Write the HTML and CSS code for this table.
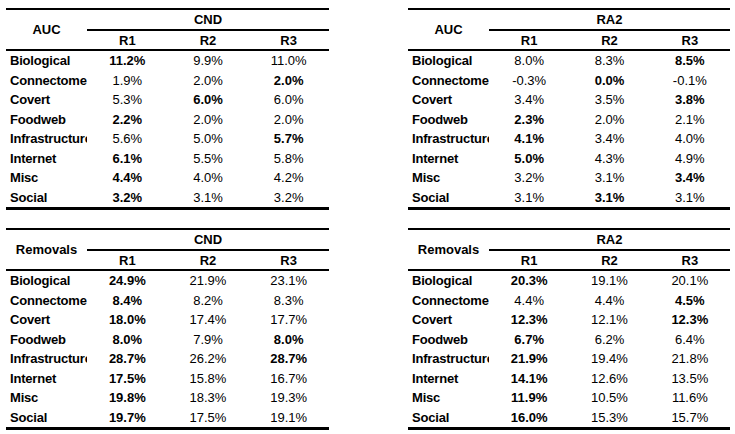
FILE: index.html
```html
<!DOCTYPE html>
<html>
<head>
<meta charset="utf-8">
<link rel="stylesheet" href="styles.css">
</head>
<body>
<div class="grid">
  <table class="res">
    <colgroup><col class="c-label"><col><col><col></colgroup>
    <thead>
      <tr class="h1"><th rowspan="2" class="corner">AUC</th><th colspan="3" class="group">CND</th></tr>
      <tr class="h2"><th>R1</th><th>R2</th><th>R3</th></tr>
    </thead>
    <tbody>
      <tr><td>Biological</td><td class="b">11.2%</td><td>9.9%</td><td>11.0%</td></tr>
      <tr><td>Connectome</td><td>1.9%</td><td>2.0%</td><td class="b">2.0%</td></tr>
      <tr><td>Covert</td><td>5.3%</td><td class="b">6.0%</td><td>6.0%</td></tr>
      <tr><td>Foodweb</td><td class="b">2.2%</td><td>2.0%</td><td>2.0%</td></tr>
      <tr><td>Infrastructure</td><td>5.6%</td><td>5.0%</td><td class="b">5.7%</td></tr>
      <tr><td>Internet</td><td class="b">6.1%</td><td>5.5%</td><td>5.8%</td></tr>
      <tr><td>Misc</td><td class="b">4.4%</td><td>4.0%</td><td>4.2%</td></tr>
      <tr><td>Social</td><td class="b">3.2%</td><td>3.1%</td><td>3.2%</td></tr>
    </tbody>
  </table>

  <table class="res">
    <colgroup><col class="c-label"><col><col><col></colgroup>
    <thead>
      <tr class="h1"><th rowspan="2" class="corner">AUC</th><th colspan="3" class="group">RA2</th></tr>
      <tr class="h2"><th>R1</th><th>R2</th><th>R3</th></tr>
    </thead>
    <tbody>
      <tr><td>Biological</td><td>8.0%</td><td>8.3%</td><td class="b">8.5%</td></tr>
      <tr><td>Connectome</td><td>-0.3%</td><td class="b">0.0%</td><td>-0.1%</td></tr>
      <tr><td>Covert</td><td>3.4%</td><td>3.5%</td><td class="b">3.8%</td></tr>
      <tr><td>Foodweb</td><td class="b">2.3%</td><td>2.0%</td><td>2.1%</td></tr>
      <tr><td>Infrastructure</td><td class="b">4.1%</td><td>3.4%</td><td>4.0%</td></tr>
      <tr><td>Internet</td><td class="b">5.0%</td><td>4.3%</td><td>4.9%</td></tr>
      <tr><td>Misc</td><td>3.2%</td><td>3.1%</td><td class="b">3.4%</td></tr>
      <tr><td>Social</td><td>3.1%</td><td class="b">3.1%</td><td>3.1%</td></tr>
    </tbody>
  </table>

  <table class="res">
    <colgroup><col class="c-label"><col><col><col></colgroup>
    <thead>
      <tr class="h1"><th rowspan="2" class="corner">Removals</th><th colspan="3" class="group">CND</th></tr>
      <tr class="h2"><th>R1</th><th>R2</th><th>R3</th></tr>
    </thead>
    <tbody>
      <tr><td>Biological</td><td class="b">24.9%</td><td>21.9%</td><td>23.1%</td></tr>
      <tr><td>Connectome</td><td class="b">8.4%</td><td>8.2%</td><td>8.3%</td></tr>
      <tr><td>Covert</td><td class="b">18.0%</td><td>17.4%</td><td>17.7%</td></tr>
      <tr><td>Foodweb</td><td class="b">8.0%</td><td>7.9%</td><td class="b">8.0%</td></tr>
      <tr><td>Infrastructure</td><td class="b">28.7%</td><td>26.2%</td><td class="b">28.7%</td></tr>
      <tr><td>Internet</td><td class="b">17.5%</td><td>15.8%</td><td>16.7%</td></tr>
      <tr><td>Misc</td><td class="b">19.8%</td><td>18.3%</td><td>19.3%</td></tr>
      <tr><td>Social</td><td class="b">19.7%</td><td>17.5%</td><td>19.1%</td></tr>
    </tbody>
  </table>

  <table class="res">
    <colgroup><col class="c-label"><col><col><col></colgroup>
    <thead>
      <tr class="h1"><th rowspan="2" class="corner">Removals</th><th colspan="3" class="group">RA2</th></tr>
      <tr class="h2"><th>R1</th><th>R2</th><th>R3</th></tr>
    </thead>
    <tbody>
      <tr><td>Biological</td><td class="b">20.3%</td><td>19.1%</td><td>20.1%</td></tr>
      <tr><td>Connectome</td><td>4.4%</td><td>4.4%</td><td class="b">4.5%</td></tr>
      <tr><td>Covert</td><td class="b">12.3%</td><td>12.1%</td><td class="b">12.3%</td></tr>
      <tr><td>Foodweb</td><td class="b">6.7%</td><td>6.2%</td><td>6.4%</td></tr>
      <tr><td>Infrastructure</td><td class="b">21.9%</td><td>19.4%</td><td>21.8%</td></tr>
      <tr><td>Internet</td><td class="b">14.1%</td><td>12.6%</td><td>13.5%</td></tr>
      <tr><td>Misc</td><td class="b">11.9%</td><td>10.5%</td><td>11.6%</td></tr>
      <tr><td>Social</td><td class="b">16.0%</td><td>15.3%</td><td>15.7%</td></tr>
    </tbody>
  </table>
</div>
</body>
</html>
```

FILE: styles.css
```css
html, body {
  margin: 0;
  padding: 0;
  background: #ffffff;
}

body {
  font-family: "Liberation Sans", Arial, sans-serif;
  font-size: 13px;
  color: #000000;
}

.grid {
  display: grid;
  grid-template-columns: 323px 322px;
  column-gap: 79px;
  row-gap: 18px;
  padding: 8px 0 0 6px;
}

.res {
  border-collapse: separate;
  border-spacing: 0;
  table-layout: fixed;
  width: 100%;
  border-top: 2px solid #000;
  border-bottom: 3px solid #000;
}

.c-label {
  width: 81px;
}

.res th,
.res td {
  padding: 0;
  text-align: center;
  white-space: nowrap;
  overflow: hidden;
  vertical-align: middle;
}

.res th {
  font-weight: bold;
}

.h1 th.group {
  height: 19px;
  border-bottom: 2px solid #000;
}

.h2 th {
  height: 18px;
  border-bottom: 2px solid #000;
}

.res th.corner {
  border-bottom: 2px solid #000;
}

.res tbody td {
  height: 19.5px;
  line-height: 19.5px;
}

.res tbody td:first-child {
  text-align: left;
  padding-left: 4px;
  letter-spacing: -0.2px;
  font-weight: bold;
}

.res td.b {
  font-weight: bold;
}
```
